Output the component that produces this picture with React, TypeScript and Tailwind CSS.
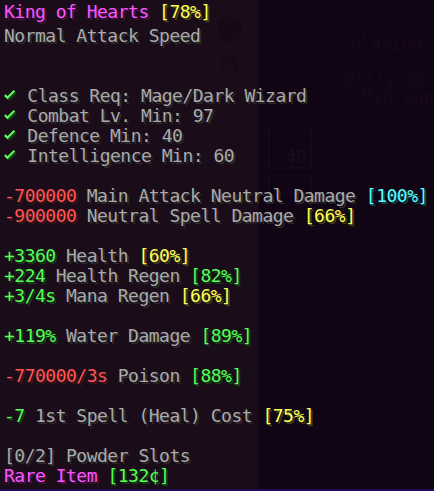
const font = { fontFamily: '"DejaVu Sans Mono", "Liberation Mono", monospace' }

type Seg = [string, string]

const C = {
  pink: "text-[#ff55ff] [text-shadow:2px_2px_0_#3f153f]",
  yellow: "text-[#ffff55] [text-shadow:2px_2px_0_#3f3f15]",
  gray: "text-[#aaaaaa] [text-shadow:2px_2px_0_#2a2a2a]",
  green: "text-[#55ff55] [text-shadow:2px_2px_0_#153f15]",
  red: "text-[#ff5555] [text-shadow:2px_2px_0_#3f1515]",
  aqua: "text-[#55ffff] [text-shadow:2px_2px_0_#153f3f]",
}

const CHECK = "check"

const lines: Seg[][] = [
  [["Normal Attack Speed", C.gray]],
  [],
  [],
  [[CHECK, ""], [" Class Req: Mage/Dark Wizard", C.gray]],
  [[CHECK, ""], [" Combat Lv. Min: 97", C.gray]],
  [[CHECK, ""], [" Defence Min: 40", C.gray]],
  [[CHECK, ""], [" Intelligence Min: 60", C.gray]],
  [],
  [["-700000", C.red], [" Main Attack Neutral Damage ", C.gray], ["[100%]", C.aqua]],
  [["-900000", C.red], [" Neutral Spell Damage ", C.gray], ["[66%]", C.yellow]],
  [],
  [["+3360", C.green], [" Health ", C.gray], ["[60%]", C.yellow]],
  [["+224", C.green], [" Health Regen ", C.gray], ["[82%]", C.green]],
  [["+3/4s", C.green], [" Mana Regen ", C.gray], ["[66%]", C.yellow]],
  [],
  [["+119%", C.green], [" Water Damage ", C.gray], ["[89%]", C.green]],
  [],
  [["-770000/3s", C.red], [" Poison ", C.gray], ["[88%]", C.green]],
  [],
  [["-7", C.green], [" 1st Spell (Heal) Cost ", C.gray], ["[75%]", C.yellow]],
  [],
  [["[0/2] Powder Slots", C.gray]],
  [["Rare Item", C.pink], [" [132¢]", C.green]],
]

function Check() {
  return (
    <svg className="inline-block align-[-1px]" width="13" height="14" viewBox="0 0 15 14">
      <polyline points="3,8 6,11 14,3" fill="none" stroke="#153f15" strokeWidth="2.6" />
      <polyline points="1,6 4,9 12,1" fill="none" stroke="#55ff55" strokeWidth="2.6" />
    </svg>
  )
}

function Line({ segs }: { segs: Seg[] }) {
  return (
    <div className="h-[20px] whitespace-pre leading-[20px]">
      {segs.map(([t, c], i) =>
        t === CHECK ? (
          <Check key={i} />
        ) : (
          <span key={i} className={c}>
            {t}
          </span>
        )
      )}
    </div>
  )
}

export default function App() {
  return (
    <div className="relative flex h-[491px] w-[434px] overflow-hidden bg-[#110414]" style={font}>
      {/* game gui faintly behind the tooltip */}
      <div className="flex w-[260px] flex-col items-end gap-[10px] bg-[#1b0c1a] pr-[15px] pt-[14px]">
        <svg width="26" height="30" viewBox="0 0 26 30">
          <polygon points="13,1 25,8 25,22 13,29 1,22 1,8" fill="#170916" />
        </svg>
        <svg width="22" height="18" viewBox="0 0 22 18" className="mr-[2px]">
          <path d="M2 16 V8 Q2 2 11 2 Q20 2 20 8 V16 H16 V10 Q11 7 6 10 V16 Z" fill="#170916" />
        </svg>
      </div>
      <div className="flex flex-1 gap-[32px] pl-[10px]">
        <div className="flex flex-col gap-[6px] pt-[127px]">
          <div className="flex h-[42px] w-[44px] items-end justify-end rounded-[3px] border-2 border-[#160817] pr-[4px] text-[17px] leading-[20px] text-[#1b0d1d]">
            49
          </div>
          <div className="h-[20px] w-[44px] rounded-[3px] border-2 border-[#160817]" />
        </div>
        <div className="flex flex-col whitespace-nowrap pt-[34px] text-[17px] leading-[18px] text-[#170919]">
          <div className="pl-[6px]">playing</div>
          <div className="mt-[18px]">Daily Ob</div>
          <div className="pl-[18px]">Min Dun</div>
        </div>
      </div>

      {/* tooltip */}
      <div className="absolute inset-0 flex flex-col border-b-2 border-[#25095a] pl-[4px] pt-[2px] text-[18px] tracking-[-0.5px]">
        <div className="mb-[4px]">
          <Line segs={[["King of Hearts ", C.pink], ["[78%]", C.yellow]]} />
        </div>
        {lines.map((l, i) => (
          <Line key={i} segs={l} />
        ))}
      </div>
    </div>
  )
}
